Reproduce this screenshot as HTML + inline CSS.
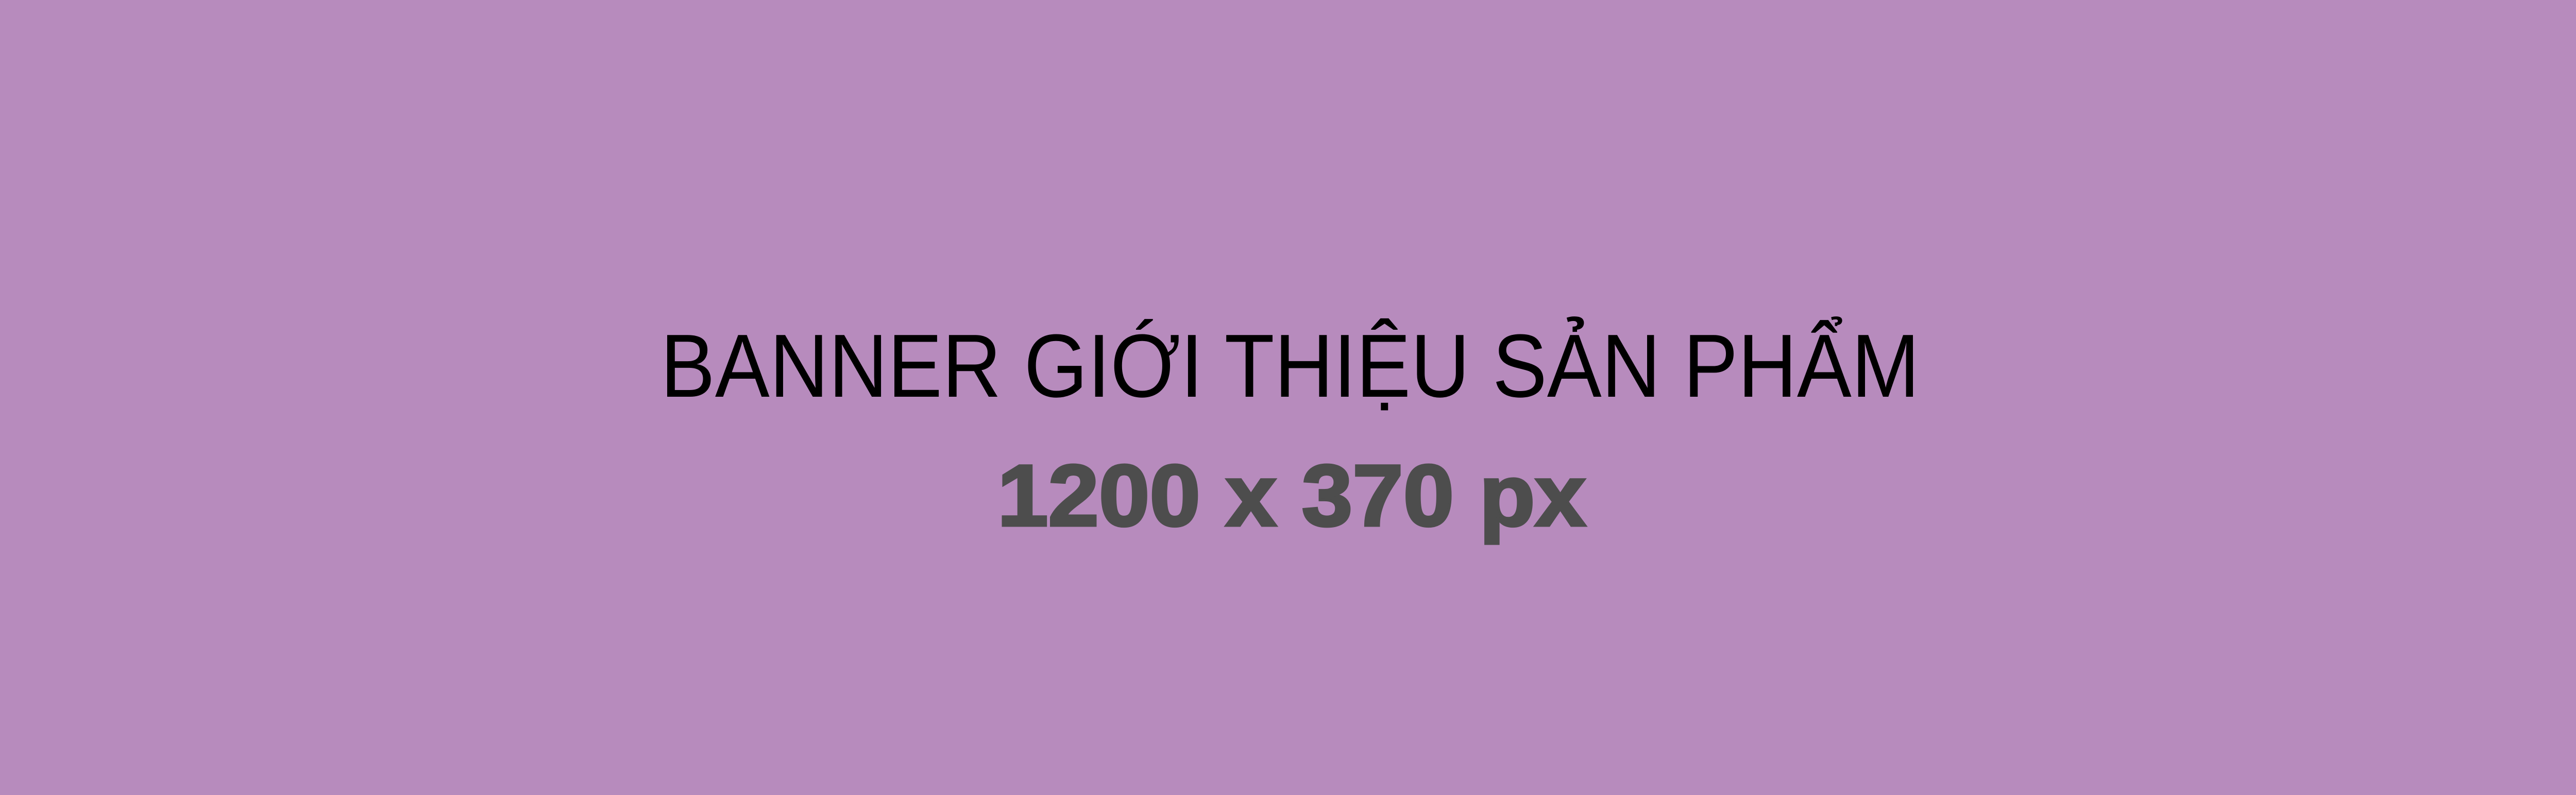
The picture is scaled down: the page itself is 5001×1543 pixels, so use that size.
<!DOCTYPE html>
<html><head><meta charset="utf-8"><style>
html,body{margin:0;padding:0;background:#b78bbd;}
svg{display:block;}
</style></head><body>
<svg width="5001" height="1543" viewBox="0 0 5001 1543" xmlns="http://www.w3.org/2000/svg">
<rect width="5001" height="1543" fill="#b78bbd"/>
<text x="1282" y="770" font-family="Liberation Sans, DejaVu Sans, sans-serif" font-size="174" fill="#000" textLength="2444" lengthAdjust="spacingAndGlyphs">BANNER GIỚI THIỆU SẢN PHẨM</text>
<text x="1936" y="1020" font-family="Liberation Sans, DejaVu Sans, sans-serif" font-size="169" font-weight="bold" fill="#4d4d4d" stroke="#4d4d4d" stroke-width="5" textLength="1142" lengthAdjust="spacingAndGlyphs">1200 x 370 px</text>
</svg>
</body></html>
